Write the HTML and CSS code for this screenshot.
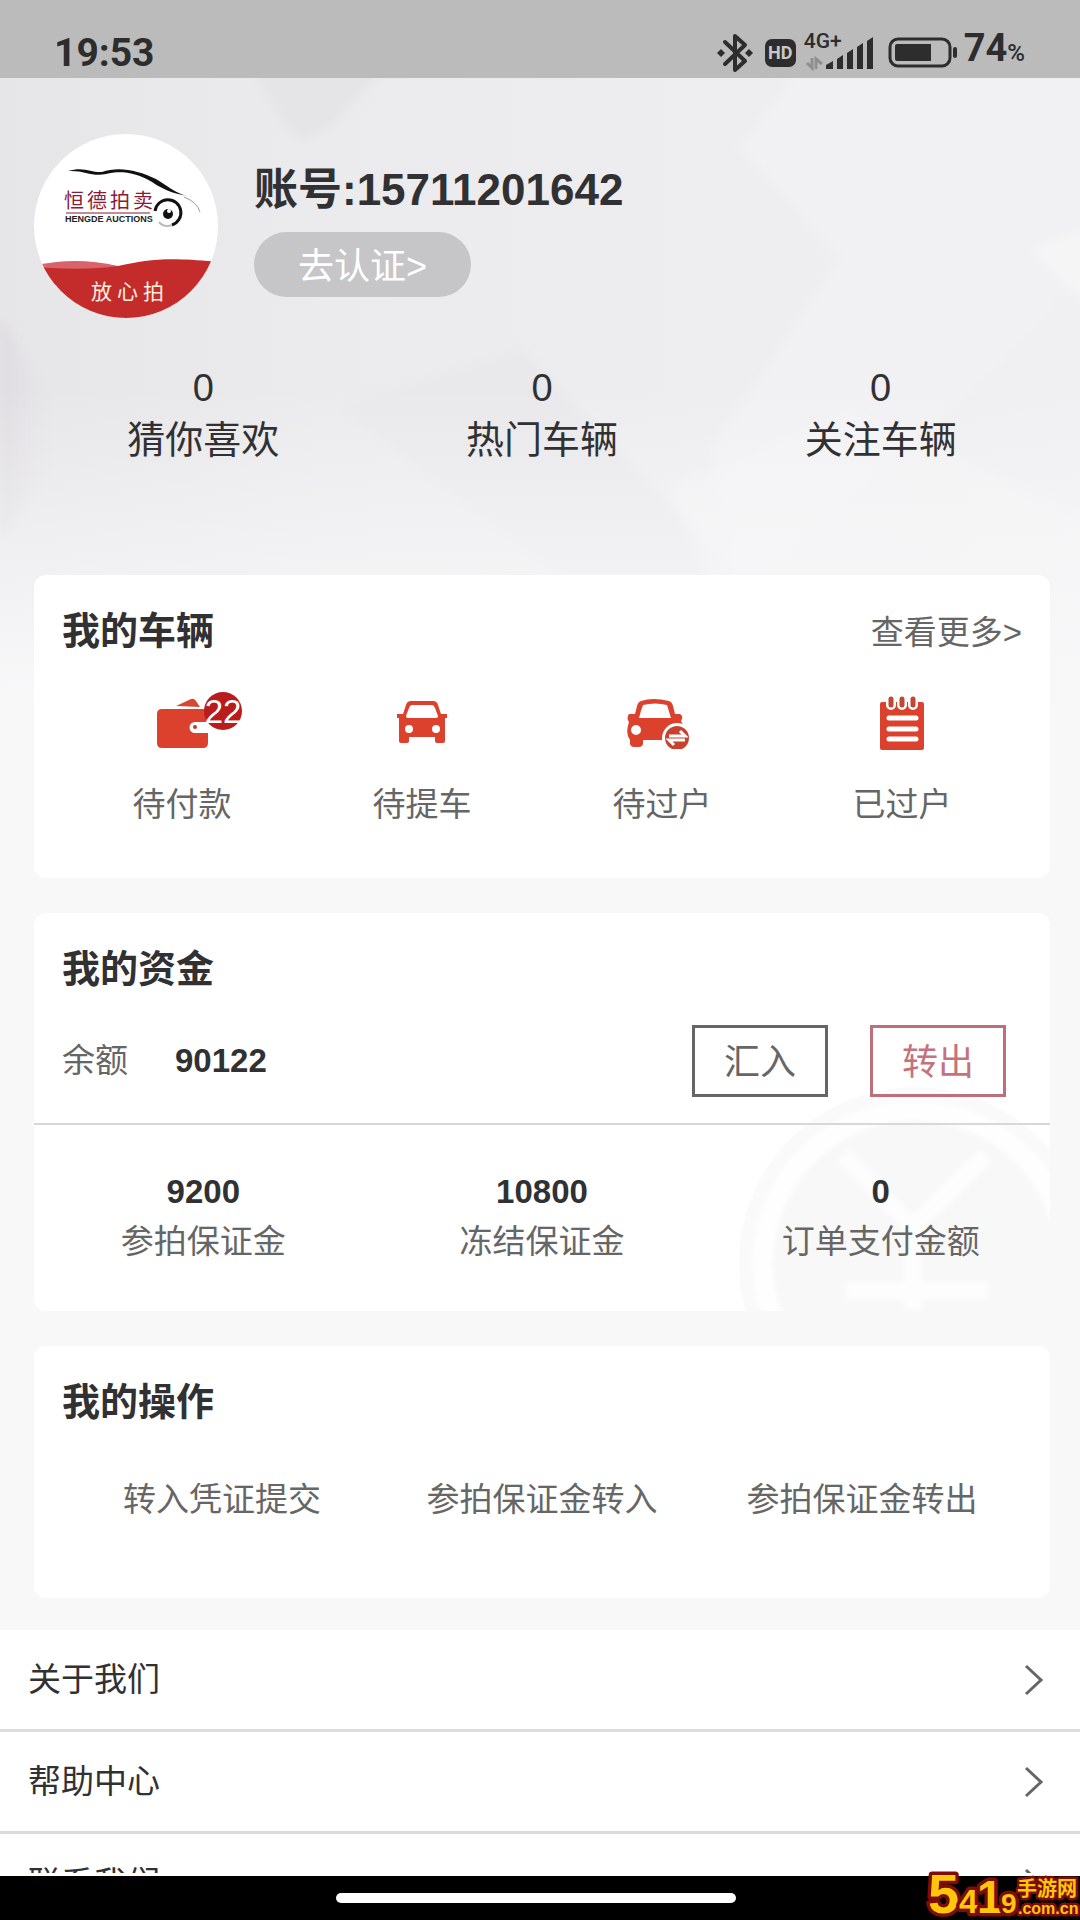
FILE: index.html
```html
<!DOCTYPE html>
<html lang="zh-CN">
<head>
<meta charset="utf-8">
<meta name="viewport" content="width=device-width, initial-scale=1">
<title>我的</title>
<link rel="stylesheet" href="styles.css">
</head>
<body>
<div class="screen">
  <header class="status-bar">
    <span class="clock">19:53</span>
    <div class="status-icons">
      <svg class="bluetooth" viewBox="0 0 36 40" width="36" height="40" aria-label="蓝牙">
        <path d="M8 9 28 28 18 37V3l10 9L8 31" fill="none" stroke="#2d2d2d" stroke-width="4" stroke-linejoin="round" stroke-linecap="round"/>
        <path d="M4 16l4 4-4 4-4-4zM32 16l4 4-4 4-4-4z" fill="#2d2d2d"/>
      </svg>
      <span class="hd">HD</span>
      <div class="signal">
        <span class="network">4G+</span>
        <svg viewBox="0 0 70 40" width="70" height="40" aria-label="信号">
          <path d="M8 25v10l-5-5M12 36V26l6 5" fill="none" stroke="#8f8f8f" stroke-width="3"/>
          <path d="M22 36v-4l7-4v8zM33 36V26l6-4v14zM43 36V20l6-4v20zM53 36V14l6-4v26zM63 36V8l6-4v32z" fill="#2d2d2d"/>
        </svg>
      </div>
      <svg class="battery" viewBox="0 0 70 32" width="70" height="32" aria-label="电池">
        <rect x="2" y="2" width="60" height="27" rx="8" fill="none" stroke="#2d2d2d" stroke-width="3"/>
        <path d="M9 7h34v17H9a2 2 0 0 1-2-2V9a2 2 0 0 1 2-2z" fill="#2d2d2d"/>
        <rect x="65" y="10" width="4" height="11" rx="2" fill="#2d2d2d"/>
      </svg>
      <span class="percent">74<small>%</small></span>
    </div>
  </header>

  <main class="scroll">
    <svg class="backdrop" viewBox="0 0 1080 620" preserveAspectRatio="none" aria-hidden="true">
      <defs>
        <linearGradient id="base" x1="0" y1="0" x2="1" y2="0">
          <stop offset="0" stop-color="#e6e5e8"/>
          <stop offset="0.3" stop-color="#ebeaec"/>
          <stop offset="1" stop-color="#f0eff1"/>
        </linearGradient>
        <linearGradient id="fade" x1="0" y1="0" x2="0" y2="1">
          <stop offset="0.5" stop-color="#f8f8f9" stop-opacity="0"/>
          <stop offset="1" stop-color="#f8f8f9"/>
        </linearGradient>
        <linearGradient id="edge" x1="0" y1="0" x2="1" y2="0">
          <stop offset="0" stop-color="#dddbdf"/>
          <stop offset="1" stop-color="#e6e5e8" stop-opacity="0"/>
        </linearGradient>
        <filter id="soft"><feGaussianBlur stdDeviation="5"/></filter>
      </defs>
      <rect width="1080" height="620" fill="url(#base)"/>
      <g filter="url(#soft)">
        <path d="M250 -10H385L330 50 300 62 280 40z" fill="#e5e4e7"/>
        <path d="M800 -10H1090V190L1000 290 740 520 710 370 840 180 738 70z" fill="#f1f0f2"/>
        <path d="M340 330 520 270 740 500 560 500z" fill="#e9e8eb"/>
        <path d="M1090 150 1030 170 1090 230z" fill="#f5f5f6"/>
        <path d="M0 240 60 330 50 400 0 460z" fill="url(#edge)"/>
        <path d="M670 410 850 330 1090 440V620H760z" fill="#f6f6f8" fill-opacity="0.5"/>
      </g>
      <rect width="1080" height="620" fill="url(#fade)"/>
    </svg>

    <div class="content">
      <section class="profile">
        <svg class="avatar" viewBox="0 0 184 184" width="184" height="184" role="img" aria-label="恒德拍卖">
          <defs>
            <clipPath id="round"><circle cx="92" cy="92" r="92"/></clipPath>
          </defs>
          <g clip-path="url(#round)">
            <rect width="184" height="184" fill="#fff"/>
            <path d="M0 132Q40 122 84 132V150H0z" fill="#d9636a"/>
            <path d="M0 133Q50 137 84 132C115 125 135 123 184 128V184H0z" fill="#c42c2b"/>
            <path d="M34 37C50 32 58 39 68 38 84 32 104 36 122 45 136 54 148 63 160 63 144 61 131 57 118 48 100 37 84 37 72 40 58 43 50 36 34 37z" fill="#111"/>
            <path d="M150 63Q163 68 166 78" fill="none" stroke="#999" stroke-width="1"/>
            <path d="M121 77A13 13 0 1 1 138 91" fill="none" stroke="#111" stroke-width="3"/>
            <path d="M138 91Q130 94 125 88" fill="none" stroke="#bbb" stroke-width="2"/>
            <circle cx="134" cy="80" r="5" fill="#111"/>
            <circle cx="135" cy="77" r="2" fill="#fff"/>
            <text class="logo-name" x="30 53 76 99" y="74">恒德拍卖</text>
            <path d="M32 79H116" stroke="#8a1a30" stroke-width="1"/>
            <text class="logo-latin" x="31" y="88">HENGDE AUCTIONS</text>
            <text class="logo-slogan" x="57 83 109" y="165">放心拍</text>
          </g>
        </svg>
        <div class="account">
          <h1>账号:15711201642</h1>
          <button class="verify" type="button">去认证&gt;</button>
        </div>
      </section>

      <ul class="stats">
        <li><span>0</span><span>猜你喜欢</span></li>
        <li><span>0</span><span>热门车辆</span></li>
        <li><span>0</span><span>关注车辆</span></li>
      </ul>

      <section class="card cars">
        <div class="card-head">
          <h2>我的车辆</h2>
          <a href="#">查看更多&gt;</a>
        </div>
        <ul class="car-states">
          <li>
            <div class="icon">
              <svg viewBox="0 0 52 52" width="52" height="52" aria-hidden="true">
                <path d="M20 9 35 2q3-1 5 2l4 6z" fill="#d34a34"/>
                <path d="M6 12H47q5 0 5 5v8H39a5 5 0 0 0 0 11H52v10q0 5-5 5H6q-5 0-5-5V17q0-5 5-5z" fill="#db412c"/>
                <circle cx="39" cy="30" r="2" fill="#b6402f"/>
              </svg>
              <span class="badge">22</span>
            </div>
            <span>待付款</span>
          </li>
          <li>
            <div class="icon">
              <svg viewBox="0 0 52 52" width="52" height="52" aria-hidden="true">
                <path fill-rule="evenodd" d="M15 4H37q4 0 5 4l3 9h6v4h-2v23q0 2-2 2h-6q-2 0-2-2v-4H13v4q0 2-2 2H5q-2 0-2-2V21H1v-4h6l3-9q1-4 5-4zM16 8q-2 0-3 3l-3 8q0 2 2 2H40q2 0 2-2l-3-8q-1-3-3-3zM13 28a4 4 0 1 0 0 8 4 4 0 0 0 0-8zM40 28a4 4 0 1 0 0 8 4 4 0 0 0 0-8z" fill="#db412c"/>
              </svg>
            </div>
            <span>待提车</span>
          </li>
          <li>
            <div class="icon">
              <svg viewBox="0 0 72 52" width="72" height="52" aria-hidden="true">
                <path fill-rule="evenodd" d="M15 4Q27 0 43 4q3 1 4 5l2 8h5q4 2 1 7 3 4 3 9v10H17v4q-1 3-4 3H8q-3 0-4-3v-4Q-1 37 3 25q-3-4 0-8h6l2-8q1-4 4-5zM17 8q-2 5-4 13H45L41 8Q29 5 17 8zM10 28a5 5 0 1 0 0 10 5 5 0 0 0 0-10z" fill="#db412c"/>
                <circle cx="51" cy="41" r="15" fill="#fff"/>
                <circle cx="51" cy="41" r="12" fill="#c8432f"/>
                <path d="M43 39H59L54 34M59 43H43L48 48" fill="none" stroke="#fff" stroke-width="3"/>
              </svg>
            </div>
            <span>待过户</span>
          </li>
          <li>
            <div class="icon">
              <svg viewBox="0 0 46 54" width="46" height="54" aria-hidden="true">
                <rect x="1" y="6" width="44" height="48" rx="2" fill="#db412c"/>
                <path d="M12 4V9M23 4V9M34 4V9" stroke="#fff" stroke-width="10" stroke-linecap="round"/>
                <path d="M12 3V9M23 3V9M34 3V9" stroke="#c04733" stroke-width="5" stroke-linecap="round"/>
                <path d="M10 22H37M10 33H37M10 43H37" stroke="#fff" stroke-width="5" stroke-linecap="round"/>
              </svg>
            </div>
            <span>已过户</span>
          </li>
        </ul>
      </section>

      <section class="card funds">
        <svg class="yen" viewBox="0 0 350 236" width="350" height="236" aria-hidden="true">
          <defs><filter id="haze"><feGaussianBlur stdDeviation="2"/></filter></defs>
          <circle cx="177" cy="188" r="176" fill="#fafafa"/>
          <g filter="url(#haze)">
            <circle cx="177" cy="188" r="152" fill="#f8f8f8" stroke="#fefefe" stroke-width="20"/>
            <path d="M105 80 175 152 248 80M175 152V236M108 216H250" fill="none" stroke="#fdfdfd" stroke-width="18"/>
          </g>
        </svg>
        <div class="card-head"><h2>我的资金</h2></div>
        <div class="balance">
          <span class="label">余额</span>
          <strong>90122</strong>
          <div class="actions">
            <button type="button">汇入</button>
            <button type="button" class="out">转出</button>
          </div>
        </div>
        <ul class="amounts">
          <li><strong>9200</strong><span>参拍保证金</span></li>
          <li><strong>10800</strong><span>冻结保证金</span></li>
          <li><strong>0</strong><span>订单支付金额</span></li>
        </ul>
      </section>

      <section class="card operations">
        <div class="card-head"><h2>我的操作</h2></div>
        <nav class="operation-links">
          <a href="#">转入凭证提交</a>
          <a href="#">参拍保证金转入</a>
          <a href="#">参拍保证金转出</a>
        </nav>
      </section>
    </div>

    <nav class="menu">
      <a href="#">关于我们<svg viewBox="0 0 20 32" width="20" height="32" aria-hidden="true"><path d="M2 2 17 16 2 30"/></svg></a>
      <a href="#">帮助中心<svg viewBox="0 0 20 32" width="20" height="32" aria-hidden="true"><path d="M2 2 17 16 2 30"/></svg></a>
      <a href="#">联系我们<svg viewBox="0 0 20 32" width="20" height="32" aria-hidden="true"><path d="M2 2 17 16 2 30"/></svg></a>
    </nav>
  </main>

  <footer class="home-bar">
    <span class="handle"></span>
    <svg class="site-mark" viewBox="0 0 155 60" width="155" height="60" role="img" aria-label="手游网">
      <text x="3" y="53" font-size="56">5</text>
      <text x="34" y="53" font-size="34">4</text>
      <text x="52" y="53" font-size="46">1</text>
      <text x="76" y="53" font-size="28">9</text>
      <text class="mark-site" x="92" y="36" font-size="20">手游网</text>
      <text class="mark-site" x="93" y="54" font-size="16">.com.cn</text>
    </svg>
  </footer>
</div>
</body>
</html>
```
FILE: styles.css
```css
* {
  box-sizing: border-box;
}

body,
h1,
h2,
ul {
  margin: 0;
  padding: 0;
}

ul {
  list-style: none;
}

a {
  color: inherit;
  text-decoration: none;
}

button {
  font-family: inherit;
  padding: 0 0 4px;
  cursor: pointer;
}

svg {
  display: block;
}

body {
  background: #f8f8f9;
  color: #313133;
  font-family: "Liberation Sans", "Noto Sans CJK SC", sans-serif;
  font-size: 33px;
  line-height: 50px;
}

.screen {
  display: flex;
  flex-direction: column;
  height: 100vh;
}

/* status bar */
.status-bar {
  display: flex;
  flex: none;
  align-items: flex-end;
  justify-content: space-between;
  height: 78px;
  padding: 0 55px 5px 54px;
  background: #bbb;
  color: #2d2d2d;
  font-family: Roboto, "Liberation Sans", sans-serif;
  font-weight: 700;
  line-height: 40px;
}

.clock {
  font-size: 39px;
}

.status-icons {
  display: flex;
  align-items: flex-end;
}

.hd {
  width: 31px;
  margin: 0 8px 6px 12px;
  border-radius: 7px;
  background: #2d2d2d;
  color: #c8c8c8;
  font-size: 18px;
  line-height: 28px;
  text-align: center;
}

.signal {
  position: relative;
  margin-right: 14px;
}

.network {
  position: absolute;
  top: -2px;
  left: 0;
  font-size: 21px;
  font-weight: 500;
  line-height: 20px;
}

.battery {
  margin: 0 6px 4px 0;
}

.percent {
  font-size: 38px;
}

.percent small {
  font-size: 24px;
  font-weight: 500;
}

/* scrolling page */
.scroll {
  position: relative;
  flex: 1;
  min-height: 0;
  overflow: hidden;
}

.backdrop {
  position: absolute;
  top: 0;
  left: 0;
  width: 100%;
  height: 620px;
}

.content {
  position: relative;
  padding: 56px 30px 32px 34px;
}

.profile {
  display: flex;
  gap: 36px;
}

.logo-name {
  fill: #8a1a38;
  font-size: 20px;
}

.logo-latin {
  fill: #222;
  font-size: 9px;
  font-weight: 700;
}

.logo-slogan {
  fill: #fff1e0;
  font-size: 21px;
}

.account {
  display: flex;
  flex-direction: column;
  align-items: flex-start;
  gap: 16px;
  padding-top: 30px;
}

.account h1 {
  font-size: 44px;
  line-height: 52px;
}

.verify {
  width: 217px;
  height: 65px;
  border: 0;
  border-radius: 33px;
  background: #c6c6c8;
  color: #fff;
  font-size: 36px;
}

.stats,
.amounts {
  display: grid;
  grid-template-columns: repeat(3, 1fr);
  text-align: center;
}

.stats li,
.amounts li {
  display: flex;
  flex-direction: column;
}

.stats {
  margin: 44px 0 109px;
  font-size: 38px;
  line-height: 52px;
}

/* cards */
.card {
  position: relative;
  margin-top: 35px;
  padding-top: 29px;
  border-radius: 12px;
  background: #fff;
  overflow: hidden;
  color: #666;
}

.card-head {
  display: flex;
  align-items: center;
  justify-content: space-between;
  padding: 0 28px;
}

.card-head a {
  padding-top: 4px;
}

.card h2 {
  color: #313133;
  font-size: 38px;
  line-height: 54px;
}

.card strong {
  color: #313133;
}

.cars {
  padding-bottom: 48px;
}

.car-states {
  display: grid;
  grid-template-columns: repeat(4, 1fr);
  margin-top: 38px;
  padding: 0 28px;
}

.car-states li {
  display: flex;
  flex-direction: column;
  align-items: center;
  gap: 30px;
}

.icon {
  display: flex;
  position: relative;
  align-items: center;
  justify-content: center;
  height: 54px;
}

.badge {
  position: absolute;
  top: -4px;
  left: 48px;
  display: flex;
  align-items: center;
  justify-content: center;
  width: 38px;
  height: 38px;
  padding-top: 2px;
  border-radius: 50%;
  background: #b81c1c;
  color: #fff;
}

.yen {
  position: absolute;
  right: -38px;
  bottom: 0;
}

.balance {
  position: relative;
  display: flex;
  align-items: center;
  margin-top: 29px;
  padding: 0 44px 26px 28px;
  border-bottom: 2px solid #d8d8da;
}

.balance strong {
  margin-left: 47px;
}

.actions {
  display: flex;
  gap: 42px;
  margin-left: auto;
}

.actions button {
  width: 136px;
  height: 72px;
  border: 3px solid #666;
  background: transparent;
  color: #666;
  font-size: 36px;
}

.actions .out {
  border-color: #bd6f7a;
  color: #c4727c;
}

.amounts {
  position: relative;
  padding: 42px 0 44px;
}

.operation-links {
  display: grid;
  grid-template-columns: repeat(3, 1fr);
  margin-top: 46px;
  padding: 0 28px 73px;
  text-align: center;
}

/* menu list */
.menu {
  position: relative;
  background: #fff;
}

.menu a {
  display: flex;
  align-items: center;
  justify-content: space-between;
  height: 102px;
  padding: 0 36px 0 28px;
  border-bottom: 3px solid #dcdcde;
}

.menu svg {
  fill: none;
  stroke: #666;
  stroke-width: 3;
}

/* system home indicator */
.home-bar {
  position: relative;
  display: flex;
  flex: none;
  align-items: center;
  justify-content: center;
  height: 47px;
  padding-right: 8px;
  border-top: 3px solid #fff;
  background: #000;
}

.handle {
  width: 400px;
  height: 10px;
  border-radius: 5px;
  background: #fff;
}

.site-mark {
  position: absolute;
  right: 0;
  bottom: 0;
  fill: #ffc60a;
  stroke: #7d0d08;
  stroke-width: 7;
  stroke-linejoin: round;
  paint-order: stroke;
  font-weight: 700;
}

.mark-site {
  stroke-width: 5;
}
```
